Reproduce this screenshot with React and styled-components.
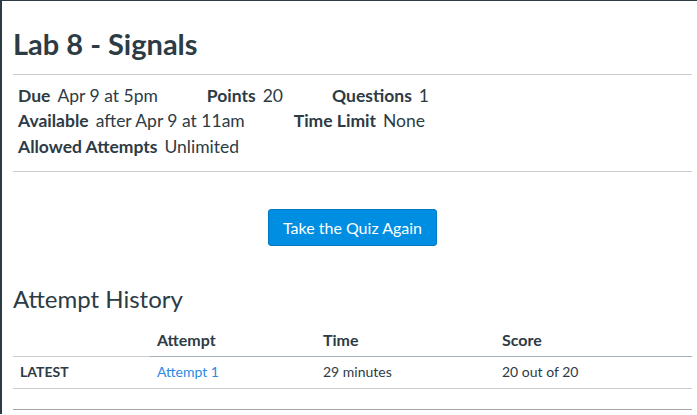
import styled, { createGlobalStyle } from "styled-components"

const Global = createGlobalStyle`
  html, body {
    margin: 0;
    padding: 0;
    background: #fff;
  }
  body {
    font-family: Lato, "Liberation Sans", sans-serif;
    color: #2d3b45;
  }
`

const details = [
  [
    { label: "Due", value: "Apr 9 at 5pm" },
    { label: "Points", value: "20" },
    { label: "Questions", value: "1" },
  ],
  [
    { label: "Available", value: "after Apr 9 at 11am" },
    { label: "Time Limit", value: "None" },
  ],
  [{ label: "Allowed Attempts", value: "Unlimited" }],
]

const columns = ["", "Attempt", "Time", "Score"]

export default function App() {
  return (
    <>
      <Global />
      <Page>
        <Title>Lab 8 - Signals</Title>
        <Rule $top={13} />
        <Details>
          {details.map((row, i) => (
            <DetailRow key={i}>
              {row.map((d) => (
                <DetailItem key={d.label}>
                  <Label>{d.label}</Label>
                  <Value>{d.value}</Value>
                </DetailItem>
              ))}
            </DetailRow>
          ))}
        </Details>
        <Rule $top={0} />
        <Actions>
          <Button>Take the Quiz Again</Button>
        </Actions>
        <SectionTitle>Attempt History</SectionTitle>
        <Table>
          <HeadRow>
            {columns.map((c, i) => (
              <HeadCell key={i} $first={i === 0}>{c}</HeadCell>
            ))}
          </HeadRow>
          <BodyRow>
            <Cell><Latest>LATEST</Latest></Cell>
            <Cell><Link href="#">Attempt 1</Link></Cell>
            <Cell>29 minutes</Cell>
            <Cell>20 out of 20</Cell>
          </BodyRow>
        </Table>
        <BottomRule />
      </Page>
    </>
  )
}

const Page = styled.div`
  min-height: 414px;
  border-top: 1px solid #2d3b45;
  border-left: 2px solid #2d3b45;
  padding: 0 5px 0 11px;
  box-sizing: border-box;
`

const Title = styled.h1`
  margin: 26px 0 0;
  font-size: 29px;
  line-height: 34px;
  font-weight: 700;
`

const Rule = styled.hr`
  margin: ${(p) => p.$top}px 0 0;
  border: none;
  border-top: 1px solid #c7cdd1;
  height: 0;
`

const Details = styled.div`
  padding: 7.5px 5px 12px;
`

const DetailRow = styled.div`
  display: flex;
  column-gap: 49px;
  font-size: 17.5px;
  line-height: 25.5px;
`

const DetailItem = styled.div`
  display: flex;
`

const Label = styled.span`
  font-weight: 700;
  margin-right: 7px;
`

const Value = styled.span`
  font-weight: 400;
`

const Actions = styled.div`
  display: flex;
  justify-content: center;
  margin-top: 37px;
`

const Button = styled.button`
  font-family: Lato, "Liberation Sans", sans-serif;
  font-size: 16px;
  line-height: 19px;
  padding: 8px 14px;
  color: #fff;
  background: #008ee2;
  border: 1px solid #0079c1;
  border-radius: 3px;
  cursor: pointer;
`

const SectionTitle = styled.h2`
  margin: 38px 0 0;
  font-size: 24px;
  line-height: 29px;
  font-weight: 400;
`

const Table = styled.div`
  margin-top: 10px;
`

const HeadRow = styled.div`
  display: grid;
  grid-template-columns: 137px 166px 179px 1fr;
`

const BodyRow = styled(HeadRow)`
  border-bottom: 1px solid #c7cdd1;
`

const HeadCell = styled.div`
  padding: 7px 7px 6px;
  font-size: 16px;
  line-height: 20px;
  font-weight: 700;
  border-bottom: 1px solid ${(p) => (p.$first ? "#c7cdd1" : "#a5afb5")};
`

const Cell = styled.div`
  padding: 5px 7px 6px;
  font-size: 14px;
  line-height: 20px;
`

const Latest = styled.span`
  font-weight: 700;
  font-size: 14px;
`

const Link = styled.a`
  color: #2b8ae2;
  text-decoration: none;
`

const BottomRule = styled.div`
  margin-top: 20px;
  border-top: 1px solid #a5a5a5;
`
